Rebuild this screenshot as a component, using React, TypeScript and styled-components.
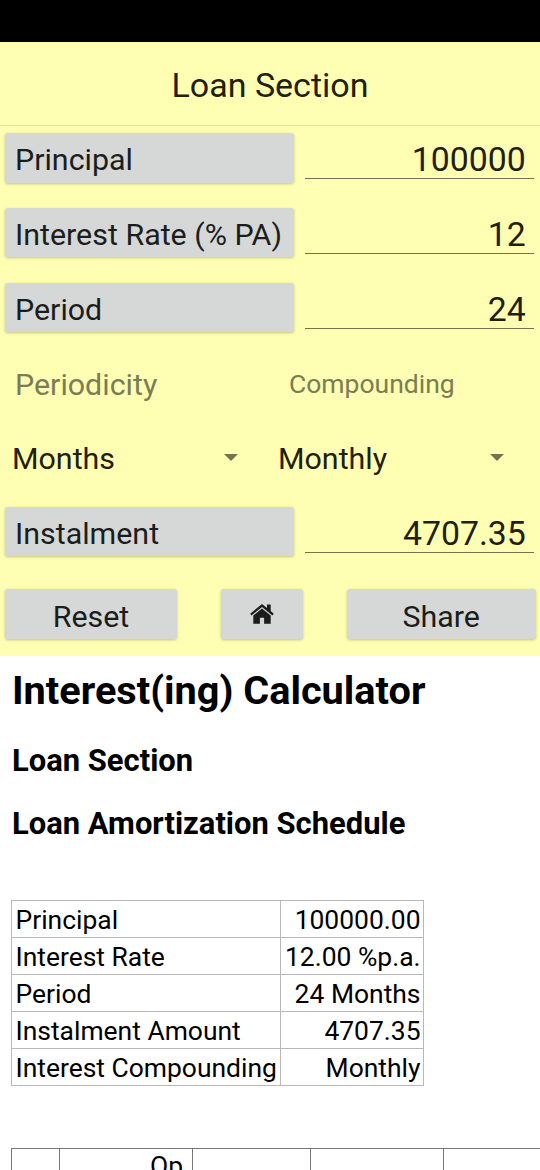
import styled, { createGlobalStyle } from "styled-components";
import * as React from "react";

const fields = [
  { label: "Principal", value: "100000" },
  { label: "Interest Rate (% PA)", value: "12" },
  { label: "Period", value: "24" },
];

const summary = [
  ["Principal", "100000.00"],
  ["Interest Rate", "12.00 %p.a."],
  ["Period", "24 Months"],
  ["Instalment Amount", "4707.35"],
  ["Interest Compounding", "Monthly"],
];

const HomeIcon = () => (
  <svg width="24" height="20" viewBox="0 0 24 20" fill="#1b1d1d">
    <path d="M12 0 0.2 9.7 1.6 11.4 12 2.9 22.4 11.4 23.8 9.7 20.7 7.1V0.4H17V4.1Z" />
    <path d="M12 4.4 3.3 11.5V19.8H9.9V13.8H14.1V19.8H20.7V11.5Z" />
  </svg>
);

const Field: React.FC<{ label: string; value: string }> = ({ label, value }) => (
  <FieldRow>
    <LabelButton>{label}</LabelButton>
    <ValueBox>{value}</ValueBox>
  </FieldRow>
);

const App: React.FC = () => {
  return (
    <Screen>
      <GlobalStyle />
      <StatusBar />
      <Form>
        <Header>Loan Section</Header>
        <Fields>
          {fields.map((field) => (
            <Field key={field.label} {...field} />
          ))}
        </Fields>
        <Captions>
          <Caption>Periodicity</Caption>
          <Caption $small>Compounding</Caption>
        </Captions>
        <Spinners>
          <Spinner>
            Months
            <Arrow />
          </Spinner>
          <Spinner>
            Monthly
            <Arrow />
          </Spinner>
        </Spinners>
        <Field label="Instalment" value="4707.35" />
        <Actions>
          <ActionButton>Reset</ActionButton>
          <ActionButton $icon>
            <HomeIcon />
          </ActionButton>
          <ActionButton>Share</ActionButton>
        </Actions>
      </Form>
      <Report>
        <ReportTitle>Interest(ing) Calculator</ReportTitle>
        <ReportHeading>Loan Section</ReportHeading>
        <ReportHeading>Loan Amortization Schedule</ReportHeading>
        <SummaryTable>
          {summary.map(([name, amount]) => (
            <React.Fragment key={name}>
              <SummaryCell>{name}</SummaryCell>
              <SummaryCell $right>{amount}</SummaryCell>
            </React.Fragment>
          ))}
        </SummaryTable>
        <ScheduleTable>
          <ScheduleCell />
          <ScheduleCell>Op</ScheduleCell>
          <ScheduleCell />
          <ScheduleCell />
          <ScheduleCell />
        </ScheduleTable>
      </Report>
    </Screen>
  );
};

export default App;

const GlobalStyle = createGlobalStyle`
  * {
    box-sizing: border-box;
  }

  body {
    margin: 0;
    overflow: hidden;
    font-family: Roboto, sans-serif;
  }
`;

const Screen = styled.div`
  display: flex;
  flex-direction: column;
  width: 540px;
  height: 1170px;
  overflow: hidden;
  background-color: #fff;
`;

const StatusBar = styled.div`
  flex: none;
  height: 42px;
  background-color: #000;
`;

const Form = styled.section`
  flex: none;
  height: 614px;
  background-color: #feffb2;
  color: #1f200f;
`;

const Header = styled.header`
  height: 84px;
  padding-top: 3px;
  border-bottom: 1px solid #e5e6a5;
  font-size: 34px;
  line-height: 80px;
  text-align: center;
`;

const Fields = styled.div`
  display: grid;
  gap: 24.8px;
  padding-top: 7px;
`;

const FieldRow = styled.div`
  display: flex;
  gap: 11px;
  height: 50px;
  padding: 0 5px;
`;

const LabelButton = styled.button`
  width: 288.6px;
  height: 49.6px;
  padding: 3px 0 0 10px;
  border: 0;
  border-radius: 3px;
  background-color: #d6d8d7;
  box-shadow: 0 1px 3px rgba(0, 0, 0, 0.24);
  color: #1b1d1d;
  font: 400 30.4px/48px Roboto, sans-serif;
  text-align: left;
  white-space: nowrap;
`;

const ValueBox = styled.div`
  width: 229.6px;
  height: 46px;
  padding-right: 8.4px;
  border-bottom: 1px solid #73744f;
  font-size: 33.8px;
  line-height: 54px;
  text-align: right;
`;

const Captions = styled.div`
  display: grid;
  grid-template-columns: 274px 1fr;
  padding: 27.8px 0 0 15px;
  height: 100.5px;
  color: #7b7c55;
`;

const Caption = styled.div<{ $small?: boolean }>`
  font-size: ${(props) => (props.$small ? 26.5 : 30.4)}px;
  line-height: ${(props) => (props.$small ? 48 : 49)}px;
`;

const Spinners = styled.div`
  display: grid;
  grid-template-columns: 226px 226px;
  column-gap: 40px;
  padding-left: 12px;
  height: 73.5px;
`;

const Spinner = styled.div`
  display: flex;
  align-items: center;
  justify-content: space-between;
  height: 50px;
  font-size: 30.4px;
`;

const Arrow = styled.span`
  margin-bottom: 1px;
  border: 7px solid transparent;
  border-top-color: #73744f;
  border-bottom: 0;
`;

const Actions = styled.div`
  display: grid;
  grid-template-columns: 172px 82px 188.5px;
  column-gap: 44px;
  padding: 32.5px 5px 0;
`;

const ActionButton = styled.button<{ $icon?: boolean }>`
  display: flex;
  align-items: center;
  justify-content: center;
  height: 50px;
  padding: ${(props) => (props.$icon ? 0 : 5)}px 0 0;
  border: 0;
  border-radius: 3px;
  background-color: #d6d8d7;
  box-shadow: 0 1px 3px rgba(0, 0, 0, 0.24);
  color: #1b1d1d;
  font: 400 30.4px Roboto, sans-serif;
`;

const Report = styled.section`
  padding-left: 11px;
  color: #000;
`;

const ReportTitle = styled.h1`
  margin: 11px 0 26px 1px;
  font: 700 39.7px/48px Roboto, sans-serif;
`;

const ReportHeading = styled.h3`
  margin: 0 0 23px 1px;
  font: 700 30.95px/40px Roboto, sans-serif;
`;

const SummaryTable = styled.div`
  display: grid;
  grid-template-columns: 269px 143px;
  grid-auto-rows: 37px;
  width: 413px;
  margin-top: 56px;
  border: 1px solid #b8b8b8;
  border-width: 1px 0 0 1px;
`;

const SummaryCell = styled.div<{ $right?: boolean }>`
  padding: 0 2.5px 0 3.5px;
  border: 1px solid #b8b8b8;
  border-width: 0 1px 1px 0;
  font-size: 26.45px;
  line-height: 37px;
  text-align: ${(props) => (props.$right ? "right" : "left")};
  white-space: nowrap;
`;

const ScheduleTable = styled.div`
  display: grid;
  grid-template-columns: 48px 133px 118px 133px 133px;
  width: 566px;
  height: 60px;
  margin-top: 62px;
  border: 1px solid #777;
  border-width: 1px 0 0 1px;
`;

const ScheduleCell = styled.div`
  padding: 2px 9px 0 0;
  border-right: 1px solid #777;
  font-size: 26.45px;
  line-height: 30px;
  text-align: right;
`;
